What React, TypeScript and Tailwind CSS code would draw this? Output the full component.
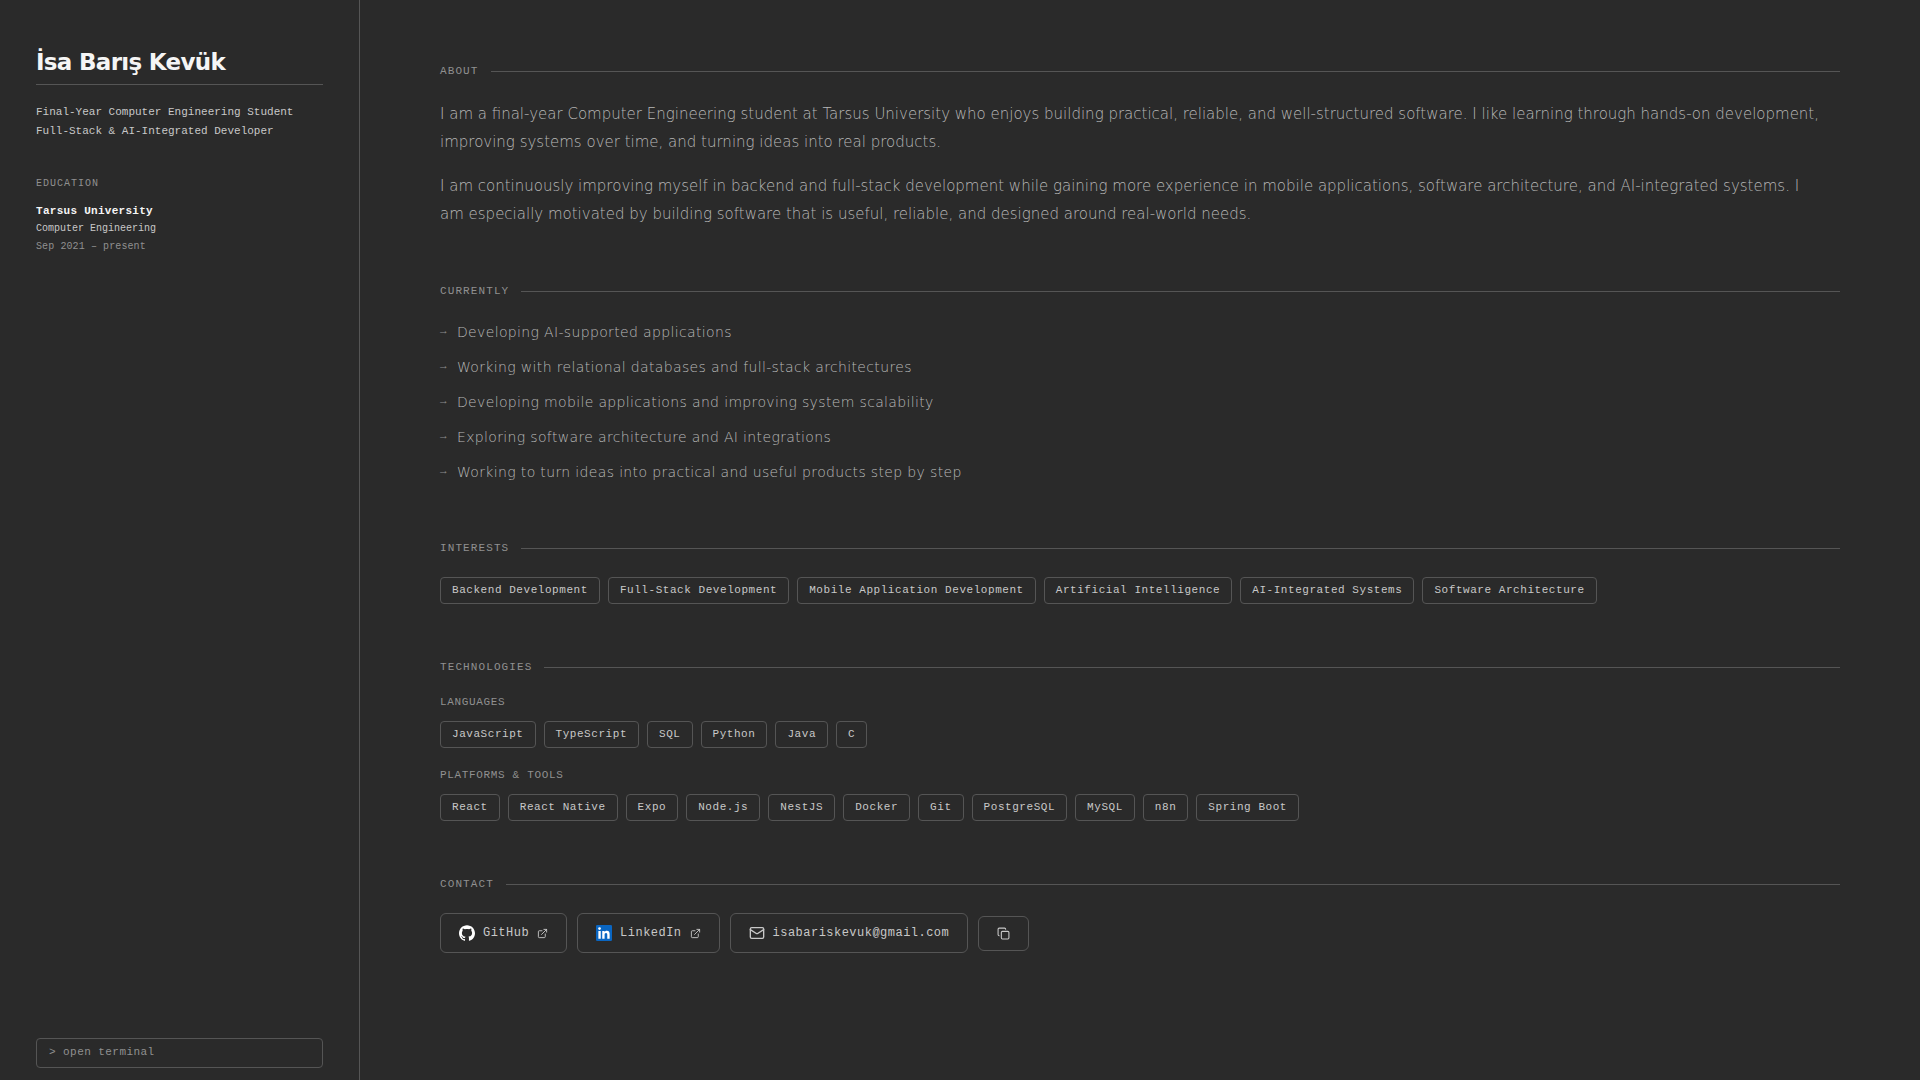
import type { ReactNode } from "react";
import { Copy, ExternalLink, Mail } from "lucide-react";

const MONO = "font-['Liberation_Mono',monospace]";

const currently = [
  "Developing AI-supported applications",
  "Working with relational databases and full-stack architectures",
  "Developing mobile applications and improving system scalability",
  "Exploring software architecture and AI integrations",
  "Working to turn ideas into practical and useful products step by step",
];

const interests = [
  "Backend Development",
  "Full-Stack Development",
  "Mobile Application Development",
  "Artificial Intelligence",
  "AI-Integrated Systems",
  "Software Architecture",
];

const languages = ["JavaScript", "TypeScript", "SQL", "Python", "Java", "C"];

const platforms = [
  "React",
  "React Native",
  "Expo",
  "Node.js",
  "NestJS",
  "Docker",
  "Git",
  "PostgreSQL",
  "MySQL",
  "n8n",
  "Spring Boot",
];

function Section({ title, children }: { title: string; children: ReactNode }) {
  return (
    <section>
      <div className="mb-[21px] flex items-center gap-3">
        <h2 className={`${MONO} text-[11px] leading-[15px] tracking-widest text-[#909090] uppercase`}>{title}</h2>
        <span className="h-px flex-1 bg-[#555555]" />
      </div>
      {children}
    </section>
  );
}

function Tags({ items }: { items: string[] }) {
  return (
    <ul className="flex flex-wrap gap-2">
      {items.map((item) => (
        <li
          key={item}
          className={`${MONO} rounded border border-[#555555] px-[11px] py-1 text-[11px] leading-[17px] tracking-wider text-[#c8c8c8]`}
        >
          {item}
        </li>
      ))}
    </ul>
  );
}

function TagGroup({ label, items }: { label: string; items: string[] }) {
  return (
    <div>
      <h3 className={`${MONO} mb-3 text-[11px] leading-[13px] tracking-[0.06em] text-[#909090] uppercase`}>{label}</h3>
      <Tags items={items} />
    </div>
  );
}

function GitHubIcon() {
  return (
    <svg viewBox="0 0 24 24" className="size-4" fill="#ffffff" aria-hidden="true">
      <path d="M12 .297c-6.63 0-12 5.373-12 12 0 5.303 3.438 9.8 8.205 11.385.6.113.82-.258.82-.577 0-.285-.01-1.04-.015-2.04-3.338.724-4.042-1.61-4.042-1.61C4.422 18.07 3.633 17.7 3.633 17.7c-1.087-.744.084-.729.084-.729 1.205.084 1.838 1.236 1.838 1.236 1.07 1.835 2.809 1.305 3.495.998.108-.776.417-1.305.76-1.605-2.665-.3-5.466-1.332-5.466-5.93 0-1.31.465-2.38 1.235-3.22-.135-.303-.54-1.523.105-3.176 0 0 1.005-.322 3.3 1.23.96-.267 1.98-.399 3-.405 1.02.006 2.04.138 3 .405 2.28-1.552 3.285-1.23 3.285-1.23.645 1.653.24 2.873.12 3.176.765.84 1.23 1.91 1.23 3.22 0 4.61-2.805 5.625-5.475 5.92.42.36.81 1.096.81 2.22 0 1.606-.015 2.896-.015 3.286 0 .315.21.69.825.57C20.565 22.092 24 17.592 24 12.297c0-6.627-5.373-12-12-12" />
    </svg>
  );
}

function LinkedInIcon() {
  return (
    <svg viewBox="0 0 24 24" className="size-4" aria-hidden="true">
      <rect width="24" height="24" rx="2" fill="#0a66c2" />
      <circle cx="5.34" cy="5.37" r="2.06" fill="#ffffff" />
      <path
        fill="#ffffff"
        d="M3.56 9h3.56v11.45H3.56zM9.35 9h3.41v1.56h.05c.48-.9 1.64-1.85 3.37-1.85 3.6 0 4.27 2.37 4.27 5.46v6.28h-3.56v-5.57c0-1.33-.03-3.04-1.85-3.04-1.85 0-2.14 1.45-2.14 2.94v5.67H9.35z"
      />
    </svg>
  );
}

function ContactLink({
  href,
  icon,
  external = false,
  children,
}: {
  href: string;
  icon: ReactNode;
  external?: boolean;
  children: ReactNode;
}) {
  return (
    <a
      href={href}
      className={`${MONO} flex items-center gap-2 rounded-md border border-[#555555] px-[18px] py-[10px] text-xs leading-[18px] tracking-[0.04em] text-[#c8c8c8]`}
    >
      {icon}
      <span>{children}</span>
      {external && <ExternalLink size={11} strokeWidth={2} />}
    </a>
  );
}

export default function App() {
  return (
    <div className="flex min-h-screen bg-[#2a2a2a] font-['DejaVu_Sans',sans-serif]">
      <aside className="flex w-[360px] shrink-0 flex-col border-r border-[#555555] px-9 pt-12 pb-3">
        <h1 className="border-b border-[#555555] pb-2 text-[23px] leading-7 font-bold tracking-[-0.03em] text-[#f5f5f5]">
          İsa Barış Kevük
        </h1>
        <p className={`${MONO} mt-[18px] text-[11px] leading-[19px] text-[#c8c8c8]`}>
          Final-Year Computer Engineering Student
          <br />
          Full-Stack &amp; AI-Integrated Developer
        </p>
        <div className={`${MONO} mt-[35px] text-[10px] leading-[18px]`}>
          <h2 className="mb-[10px] leading-4 tracking-widest text-[#909090] uppercase">Education</h2>
          <p className="text-[11px] font-bold tracking-wide text-[#f5f5f5]">Tarsus University</p>
          <p className="text-[#c8c8c8]">Computer Engineering</p>
          <p className="tracking-[0.01em] text-[#909090]">Sep 2021 – present</p>
        </div>
        <button
          type="button"
          className={`${MONO} mt-auto rounded border border-[#555555] px-3 pt-[5px] pb-[7px] text-left text-[11px] leading-4 tracking-[0.04em] text-[#909090]`}
        >
          &gt; open terminal
        </button>
      </aside>

      <main className="flex min-w-0 flex-1 flex-col gap-14 px-20 py-16">
        <Section title="About">
          <div className="flex flex-col gap-4 pr-4 text-[15px] leading-7 font-light text-[#b8b8b8]">
            <p>
              I am a final-year Computer Engineering student at Tarsus University who enjoys building practical,
              reliable, and well-structured software. I like learning through hands-on development, improving systems
              over time, and turning ideas into real products.
            </p>
            <p>
              I am continuously improving myself in backend and full-stack development while gaining more experience in
              mobile applications, software architecture, and AI-integrated systems. I am especially motivated by
              building software that is useful, reliable, and designed around real-world needs.
            </p>
          </div>
        </Section>

        <Section title="Currently">
          <ul className="flex flex-col gap-[10px] text-sm leading-[25px] font-light tracking-wide text-[#b8b8b8]">
            {currently.map((item) => (
              <li key={item} className="flex gap-[10px]">
                <span aria-hidden="true" className={`${MONO} text-[11px] leading-[22px] font-normal text-[#909090]`}>
                  →
                </span>
                <span>{item}</span>
              </li>
            ))}
          </ul>
        </Section>

        <Section title="Interests">
          <Tags items={interests} />
        </Section>

        <Section title="Technologies">
          <div className="flex flex-col gap-[21px]">
            <TagGroup label="Languages" items={languages} />
            <TagGroup label="Platforms &amp; Tools" items={platforms} />
          </div>
        </Section>

        <Section title="Contact">
          <div className="flex flex-wrap items-center gap-[10px]">
            <ContactLink href="https://github.com" icon={<GitHubIcon />} external>
              GitHub
            </ContactLink>
            <ContactLink href="https://linkedin.com" icon={<LinkedInIcon />} external>
              LinkedIn
            </ContactLink>
            <ContactLink href="mailto:isabariskevuk@gmail.com" icon={<Mail size={16} strokeWidth={2} />}>
              isabariskevuk@gmail.com
            </ContactLink>
            <button
              type="button"
              aria-label="Copy email address"
              className="rounded-md border border-[#555555] px-[18px] py-[10px] text-[#c8c8c8]"
            >
              <Copy size={13} strokeWidth={2} />
            </button>
          </div>
        </Section>
      </main>
    </div>
  );
}
